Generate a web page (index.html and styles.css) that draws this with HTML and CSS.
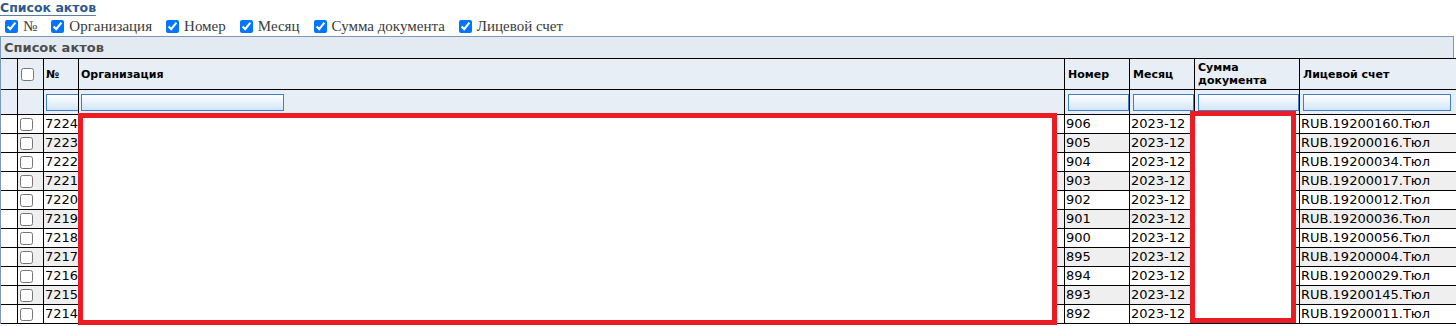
FILE: index.html
```html
<!DOCTYPE html>
<html lang="ru">
<head>
<meta charset="utf-8">
<title>Список актов</title>
<link rel="stylesheet" href="styles.css">
</head>
<body>
<div class="title-wrap"><h1 class="page-title">Список актов</h1></div>
<div class="columns">
  <label class="col-opt first"><input type="checkbox" checked><span>№</span></label>
  <label class="col-opt"><input type="checkbox" checked><span>Организация</span></label>
  <label class="col-opt"><input type="checkbox" checked><span>Номер</span></label>
  <label class="col-opt"><input type="checkbox" checked><span>Месяц</span></label>
  <label class="col-opt"><input type="checkbox" checked><span>Сумма документа</span></label>
  <label class="col-opt"><input type="checkbox" checked><span>Лицевой счет</span></label>
</div>
<div class="panel-head">Список актов</div>
<table class="grid">
  <colgroup>
    <col class="c-rn"><col class="c-cb"><col class="c-no"><col class="c-org"><col class="c-num"><col class="c-mon"><col class="c-sum"><col class="c-acc">
  </colgroup>
  <thead>
    <tr class="hdr">
      <th></th>
      <th><input type="checkbox" class="cb"></th>
      <th>№</th>
      <th>Организация</th>
      <th>Номер</th>
      <th>Месяц</th>
      <th>Сумма документа</th>
      <th>Лицевой счет</th>
    </tr>
    <tr class="flt">
      <th></th>
      <th></th>
      <th><input type="text" class="f f-no"></th>
      <th><input type="text" class="f f-org"></th>
      <th><input type="text" class="f f-num"></th>
      <th><input type="text" class="f f-mon"></th>
      <th><input type="text" class="f f-sum"></th>
      <th><input type="text" class="f f-acc"></th>
    </tr>
  </thead>
  <tbody>
    <tr><td></td><td><input type="checkbox" class="cb"></td><td>7224</td><td></td><td>906</td><td>2023-12</td><td></td><td>RUB.19200160.Тюл</td></tr>
    <tr><td></td><td><input type="checkbox" class="cb"></td><td>7223</td><td></td><td>905</td><td>2023-12</td><td></td><td>RUB.19200016.Тюл</td></tr>
    <tr><td></td><td><input type="checkbox" class="cb"></td><td>7222</td><td></td><td>904</td><td>2023-12</td><td></td><td>RUB.19200034.Тюл</td></tr>
    <tr><td></td><td><input type="checkbox" class="cb"></td><td>7221</td><td></td><td>903</td><td>2023-12</td><td></td><td>RUB.19200017.Тюл</td></tr>
    <tr><td></td><td><input type="checkbox" class="cb"></td><td>7220</td><td></td><td>902</td><td>2023-12</td><td></td><td>RUB.19200012.Тюл</td></tr>
    <tr><td></td><td><input type="checkbox" class="cb"></td><td>7219</td><td></td><td>901</td><td>2023-12</td><td></td><td>RUB.19200036.Тюл</td></tr>
    <tr><td></td><td><input type="checkbox" class="cb"></td><td>7218</td><td></td><td>900</td><td>2023-12</td><td></td><td>RUB.19200056.Тюл</td></tr>
    <tr><td></td><td><input type="checkbox" class="cb"></td><td>7217</td><td></td><td>895</td><td>2023-12</td><td></td><td>RUB.19200004.Тюл</td></tr>
    <tr><td></td><td><input type="checkbox" class="cb"></td><td>7216</td><td></td><td>894</td><td>2023-12</td><td></td><td>RUB.19200029.Тюл</td></tr>
    <tr><td></td><td><input type="checkbox" class="cb"></td><td>7215</td><td></td><td>893</td><td>2023-12</td><td></td><td>RUB.19200145.Тюл</td></tr>
    <tr><td></td><td><input type="checkbox" class="cb"></td><td>7214</td><td></td><td>892</td><td>2023-12</td><td></td><td>RUB.19200011.Тюл</td></tr>
  </tbody>
</table>
<div class="redact redact-org"></div>
<div class="redact redact-sum"></div>
</body>
</html>
```

FILE: styles.css
```css
* { box-sizing: border-box; }
html, body { margin: 0; padding: 0; background: #fff; }
body {
  position: relative;
  width: 1456px;
  height: 326px;
  overflow: hidden;
  font-family: "DejaVu Sans", Verdana, sans-serif;
  color: #000;
}
.title-wrap { height: 16px; }
.page-title {
  display: inline-block;
  vertical-align: top;
  margin: 0;
  font-size: 12.5px;
  font-weight: bold;
  line-height: 15px;
  color: #2d5a8b;
  border-bottom: 1px solid #5b7ea6;
}
.columns {
  display: flex;
  align-items: center;
  height: 20px;
  padding-left: 5px;
  font-family: "Liberation Serif", "Times New Roman", serif;
  font-size: 15px;
  color: #3a3a3a;
}
.col-opt { display: flex; align-items: center; margin-right: 14px; }
.col-opt.first { margin-right: 14px; }
.col-opt input { margin: 0 5px 0 0; width: 13px; height: 13px; }
.panel-head {
  width: 1454px;
  height: 22px;
  border: 1px solid #7f98b8;
  border-bottom: 0;
  background: #e3eaf2;
  font-size: 13px;
  font-weight: bold;
  color: #4d4d4d;
  line-height: 21px;
  padding-left: 3px;
}
.grid {
  border-collapse: separate;
  border-spacing: 0;
  table-layout: fixed;
  width: 1500px;
  border-left: 1px solid #7f98b8;
}
.c-rn { width: 17px; }
.c-cb { width: 26px; }
.c-no { width: 35px; }
.c-org { width: 986px; }
.c-num { width: 65px; }
.c-mon { width: 65px; }
.c-sum { width: 105px; }
.c-acc { width: 200px; }
.grid th, .grid td {
  border-right: 1px solid #000;
  border-bottom: 1px solid #000;
  padding: 0 2px;
  white-space: nowrap;
  overflow: hidden;
}
.hdr th {
  border-top: 1px solid #000;
  height: 32px;
  background: #e8eef5;
  font-size: 11px;
  font-weight: bold;
  line-height: 13px;
  text-align: left;
  vertical-align: middle;
  white-space: normal;
}
.hdr th:nth-child(n+5) { padding-left: 3px; }
.flt th {
  height: 25px;
  background: #e8eef5;
  vertical-align: middle;
}
.flt th:nth-child(n+5) { padding-left: 3px; }
.f {
  display: block;
  height: 17px;
  margin: 0;
  padding: 0 2px;
  border: 1px solid #3d80c4;
  background: linear-gradient(#ffffff, #d3e5f7);
  font-size: 11px;
}
.f-no { width: 40px; }
.f-org { width: 203px; }
.f-num, .f-mon { width: 61px; }
.f-sum { width: 101px; }
.f-acc { width: 148px; }
.cb {
  display: block;
  margin: 0 0 0 1px;
  width: 13px;
  height: 13px;
}
.grid td {
  height: 19px;
  font-size: 13px;
  line-height: 18px;
  padding: 0 1px;
  vertical-align: middle;
}
.grid tbody tr:nth-child(even) td { background: #efefef; }
.grid tbody tr:nth-child(even) td:first-child { background: #fff; }
.redact {
  position: absolute;
  background: #fff;
  border: 5px solid #ec1c24;
}
.redact-org { left: 78px; top: 113px; width: 979px; height: 212px; }
.redact-sum { left: 1190px; top: 111px; width: 106px; height: 212px; }
```
